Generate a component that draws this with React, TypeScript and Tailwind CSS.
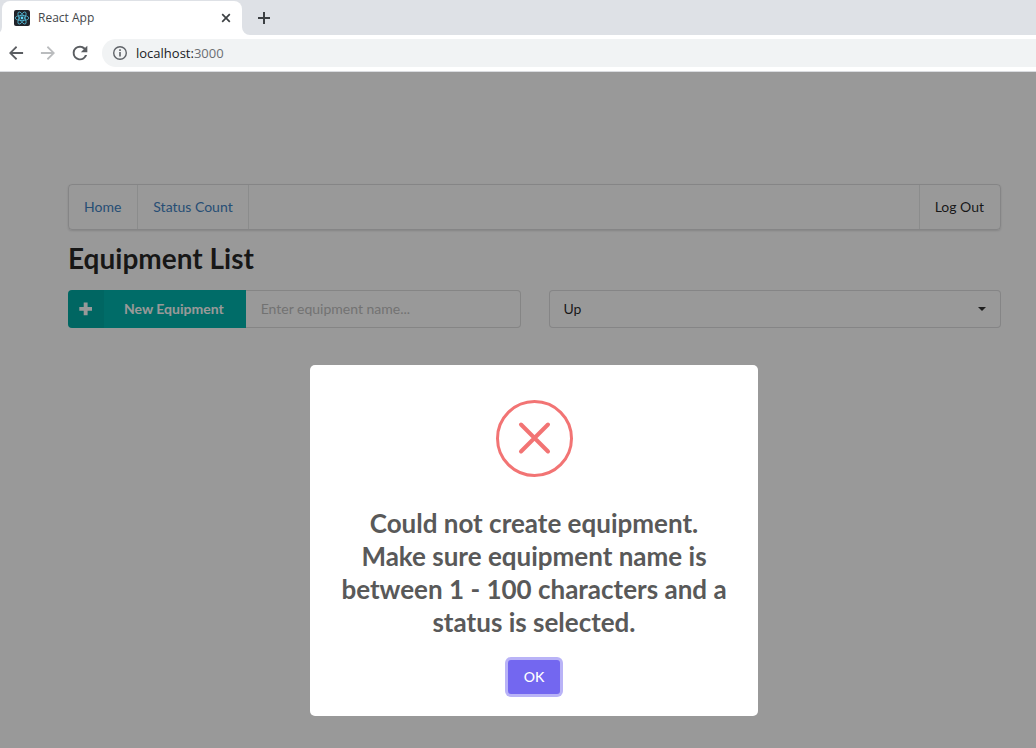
import React from "react";

function ReactFavicon() {
  return (
    <svg width="16" height="16" viewBox="0 0 16 16" aria-hidden="true">
      <rect width="16" height="16" rx="2" fill="#20232a" />
      <g fill="none" stroke="#53b9d6" strokeWidth="0.8">
        <ellipse cx="8" cy="8" rx="6.8" ry="2.6" />
        <ellipse cx="8" cy="8" rx="6.8" ry="2.6" transform="rotate(60 8 8)" />
        <ellipse cx="8" cy="8" rx="6.8" ry="2.6" transform="rotate(120 8 8)" />
      </g>
      <circle cx="8" cy="8" r="1.4" fill="#61dafb" />
    </svg>
  );
}

function GlyphIcon({ d, className }: { d: string; className: string }) {
  return (
    <svg width="20" height="20" viewBox="0 0 24 24" fill="currentColor" className={className} aria-hidden="true">
      <path d={d} />
    </svg>
  );
}

function TabStrip() {
  return (
    <div className="flex h-[35px] items-end overflow-hidden bg-[#dee1e6] pl-0.5">
      <div className="relative flex h-[34px] w-60 items-center rounded-t-lg bg-white pl-3 pr-2.5">
        <svg className="absolute bottom-0 right-full" width="8" height="8" viewBox="0 0 8 8" fill="#fff" aria-hidden="true">
          <path d="M8 0a8 8 0 0 1-8 8h8z" />
        </svg>
        <ReactFavicon />
        <span className="ml-2 flex-1 text-xs text-[#45484c]">React App</span>
        <button aria-label="Close tab" className="text-[#3c4043]">
          <svg width="12" height="12" viewBox="0 0 12 12" stroke="currentColor" strokeWidth="1.7" aria-hidden="true">
            <path d="M2.2 2.2l7.6 7.6M9.8 2.2l-7.6 7.6" />
          </svg>
        </button>
        <svg className="absolute bottom-0 left-full" width="8" height="8" viewBox="0 0 8 8" fill="#fff" aria-hidden="true">
          <path d="M0 0a8 8 0 0 0 8 8H0z" />
        </svg>
      </div>
      <button aria-label="New tab" className="ml-4 flex h-[34px] items-center text-[#3c4043]">
        <svg width="12" height="12" viewBox="0 0 12 12" stroke="currentColor" strokeWidth="2" aria-hidden="true">
          <path d="M6 0v12M0 6h12" />
        </svg>
      </button>
    </div>
  );
}

function Toolbar() {
  return (
    <div className="flex h-[37px] items-center gap-3 border-b border-[#dadce0] bg-white pl-1.5">
      <button aria-label="Back">
        <GlyphIcon className="text-[#5a5d61]" d="M20.5 10.8H7.83l5.59-5.39L12 3.6 3.6 12l8.4 8.4 1.41-1.81L7.83 13.2H20.5v-2.4z" />
      </button>
      <button aria-label="Forward">
        <GlyphIcon className="text-[#babcbe]" d="M3.5 10.8h12.67l-5.59-5.39L12 3.6l8.4 8.4-8.4 8.4-1.41-1.81 5.58-5.39H3.5v-2.4z" />
      </button>
      <button aria-label="Reload">
        <GlyphIcon
          className="text-[#5a5d61]"
          d="M18.2 5.8A8.7 8.7 0 0 0 12 3.2a8.8 8.8 0 1 0 8.5 11.1h-2.6A6.4 6.4 0 1 1 12 5.6c1.8 0 3.3.7 4.5 1.9L13 11h7.8V3.2z"
        />
      </button>
      <div className="flex h-7 flex-1 items-center rounded-l-full bg-[#f1f3f4] pl-2.5">
        <svg width="16" height="16" viewBox="0 0 16 16" fill="none" stroke="#5f6368" aria-hidden="true">
          <circle cx="8" cy="8" r="6.3" strokeWidth="1.4" />
          <path d="M8 7v4.5M8 4.3v1.6" strokeWidth="1.6" />
        </svg>
        <span className="ml-2 text-[13px] leading-5 text-[#202124]">
          localhost:<span className="text-[#6b6f73]">3000</span>
        </span>
      </div>
    </div>
  );
}

function Menu() {
  return (
    <nav className="flex h-[46px] rounded border border-[#222426]/15 text-sm shadow-[0_1px_2px_0_rgba(34,36,38,0.15)]">
      <a href="#home" className="flex items-center border-r border-[#222426]/10 pl-[15px] pr-4 text-[#4183c4]">
        Home
      </a>
      <a href="#status" className="flex items-center border-r border-[#222426]/10 px-[15px] text-[#4183c4]">
        Status Count
      </a>
      <a href="#logout" className="ml-auto flex items-center border-l border-[#222426]/10 pl-[15px] pr-4 text-black/85">
        Log Out
      </a>
    </nav>
  );
}

function EquipmentForm() {
  return (
    <form className="mt-4 grid grid-cols-2 gap-7" onSubmit={(e) => e.preventDefault()}>
      <div className="flex h-[38px]">
        <button className="flex shrink-0 overflow-hidden rounded-l bg-[#00b5ad] text-sm font-bold text-white">
          <span className="flex h-full w-9 items-center justify-center bg-black/5">
            <svg width="14" height="14" viewBox="0 0 14 14" fill="#fff" aria-hidden="true">
              <path d="M4.700 .5h3.900v4.400H13v3.900H8.600v4.400H4.700V8.800H.3V4.900h4.400z" />
            </svg>
          </span>
          <span className="flex h-full items-center pl-5 pr-[22px]">New Equipment</span>
        </button>
        <input
          aria-label="Equipment name"
          placeholder="Enter equipment name..."
          className="min-w-0 flex-1 rounded-r border border-l-0 border-[#222426]/15 bg-white px-[15px] text-sm outline-none placeholder:text-[#bfbfbf]"
        />
      </div>
      <div className="relative">
        <select
          aria-label="Status"
          className="h-[38px] w-full appearance-none rounded border border-[#222426]/15 bg-white px-3.5 text-sm text-black/85"
        >
          <option>Up</option>
          <option>Down</option>
        </select>
        <svg
          className="pointer-events-none absolute right-[15px] top-4"
          width="8"
          height="6"
          viewBox="0 0 8 6"
          fill="#333"
          aria-hidden="true"
        >
          <path d="M0 1h8L4 5z" />
        </svg>
      </div>
    </form>
  );
}

function ErrorDialog() {
  return (
    <div className="absolute inset-0 flex items-start justify-center bg-black/40 pl-8 pt-[293px]">
      <div
        role="alertdialog"
        aria-labelledby="dialog-title"
        className="flex w-[448px] flex-col items-center rounded-[5px] bg-white px-7 pb-[22px] pt-[35px]"
      >
        <svg width="78" height="78" viewBox="0 0 78 78" fill="none" stroke="#f27474" aria-hidden="true">
          <circle cx="39.500" cy="38.500" r="37" strokeWidth="3" />
          <path d="M26 24.500L53 51.500M53 24.500L26 51.500" strokeWidth="4" strokeLinecap="round" />
        </svg>
        <h2 id="dialog-title" className="mt-[29px] text-center text-[26px] font-bold leading-[33px] text-[#595959]">
          Could not create equipment. Make sure equipment name is between 1 - 100 characters and a status is selected.
        </h2>
        <button className="mt-[21px] h-[34px] rounded-[3px] bg-[#7367f0] px-4 text-sm font-medium text-white shadow-[0_0_0_3px_#b9b3f7]">
          OK
        </button>
      </div>
    </div>
  );
}

export default function App() {
  return (
    <div className="flex min-h-screen flex-col bg-white font-['Open_Sans',sans-serif]">
      <header>
        <TabStrip />
        <Toolbar />
      </header>
      <main className="relative flex-1 pl-[68px] pr-[35px] pt-28 font-['Lato',sans-serif]">
        <Menu />
        <h1 className="mt-3 text-[28px] font-bold leading-8 text-black/85">Equipment List</h1>
        <EquipmentForm />
        <ErrorDialog />
      </main>
    </div>
  );
}
